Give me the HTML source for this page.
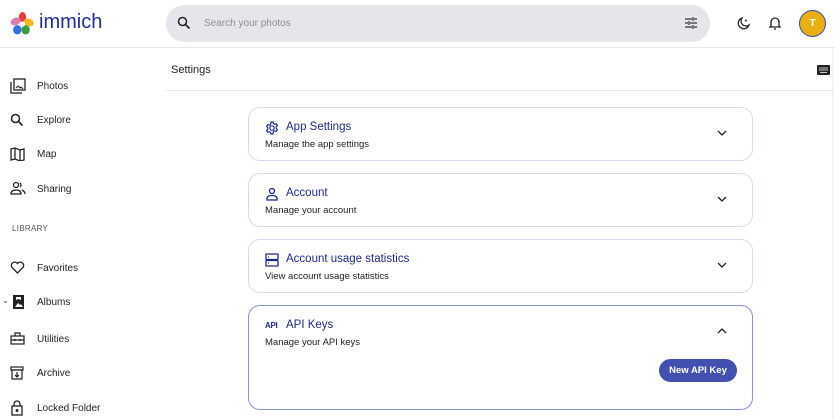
<!DOCTYPE html>
<html><head><style>
*{margin:0;padding:0;box-sizing:border-box}
body{width:835px;height:419px;overflow:hidden;background:#fff;font-family:"Liberation Sans",sans-serif;position:relative;color:#222}
.abs{position:absolute}
.hdr-line{position:absolute;left:0;top:47px;width:835px;height:1px;background:#e5e7eb}
.search{position:absolute;left:166px;top:5px;width:544px;height:37px;border-radius:19px;background:#e5e6ea}
.nav{position:absolute;left:37px;font-size:10px;color:#222}
.ico{position:absolute;left:10px}
.card{position:absolute;left:248px;width:505px;border:1px solid #d8d9ef;border-radius:12px;background:#fff}
.t{position:absolute;left:37px;top:13px;font-size:11.5px;color:#1e2a88}
.s{position:absolute;left:16px;top:31px;font-size:9.5px;color:#222}
.ci{position:absolute;left:16px;top:13px}
.chev{position:absolute;right:25px;top:22px}
</style></head><body>
<!-- logo -->
<svg class="abs" style="left:10px;top:11px" width="25" height="25" viewBox="0 0 24 24">
<ellipse cx="12" cy="6" rx="3.5" ry="5" fill="#e2403a"/>
<ellipse cx="18" cy="11" rx="5" ry="3.5" transform="rotate(20 18 11)" fill="#f2b620"/>
<ellipse cx="15" cy="18" rx="4" ry="4.5" fill="#3f9b3e"/>
<ellipse cx="7" cy="18" rx="4" ry="4.5" fill="#3471e0"/>
<ellipse cx="5.5" cy="10" rx="5" ry="3.5" transform="rotate(-20 5.5 10)" fill="#e079b0"/>
<circle cx="12" cy="12.5" r="2.5" fill="#fff"/>
</svg>
<div class="abs" style="left:39px;top:11px;font-size:20px;color:#1f2ca0">immich</div>
<div class="search"></div>
<svg class="abs" style="left:177px;top:16px" width="14" height="14" viewBox="0 0 14 14"><circle cx="5.5" cy="5.5" r="4" fill="none" stroke="#222" stroke-width="1.5"/><path d="M8.5 8.5l4 4" stroke="#222" stroke-width="1.6"/></svg>
<div class="abs" style="left:204px;top:18px;font-size:10px;color:#8a8d95">Search your photos</div>
<svg class="abs" style="left:684px;top:16px" width="14" height="14" viewBox="0 0 14 14" stroke="#333" stroke-width="1.2"><path d="M1 3h7M10 3h3M1 7h3M6 7h7M1 11h7M10 11h3M9 1v4M5 5v4M9 9v4"/></svg>
<svg class="abs" style="left:736px;top:16px" width="15" height="15" viewBox="0 0 15 15"><path d="M6 2a5.5 5.5 0 1 0 7 7A5 5 0 0 1 6 2z" fill="none" stroke="#222" stroke-width="1.3"/><path d="M10 3l.5 1 1 .5-1 .5-.5 1-.5-1-1-.5 1-.5z" fill="#222"/></svg>
<svg class="abs" style="left:768px;top:15px" width="14" height="16" viewBox="0 0 14 16"><path d="M3 11V7a4 4 0 0 1 8 0v4l1 1H2z" fill="none" stroke="#222" stroke-width="1.3"/><path d="M6 14h2" stroke="#222" stroke-width="1.3"/></svg>
<div class="abs" style="left:799px;top:10px;width:27px;height:27px;border-radius:50%;background:#e8b015;border:1px solid #3a4aa8;color:#fff;font-size:10px;font-weight:bold;text-align:center;line-height:25px">T</div>
<div class="hdr-line"></div>

<!-- sidebar -->
<svg class="ico" style="top:78px" width="16" height="16" viewBox="0 0 16 16" fill="none" stroke="#222" stroke-width="1.3"><rect x="4" y="1" width="11" height="11"/><path d="M1 4v11h11"/><path d="M6 10l2-2 2 2 1-1 2 2" stroke-width="1"/></svg>
<div class="nav" style="top:81px">Photos</div>
<svg class="ico" style="top:113px" width="14" height="14" viewBox="0 0 14 14"><circle cx="5.5" cy="5.5" r="4" fill="none" stroke="#222" stroke-width="1.5"/><path d="M8.5 8.5l4 4" stroke="#222" stroke-width="1.6"/></svg>
<div class="nav" style="top:115px">Explore</div>
<svg class="ico" style="top:147px" width="15" height="14" viewBox="0 0 15 14" fill="none" stroke="#222" stroke-width="1.3"><path d="M1 2l4-1 5 2 4-1v11l-4 1-5-2-4 1zM5 1v11M10 3v11"/></svg>
<div class="nav" style="top:149px">Map</div>
<svg class="ico" style="top:181px" width="16" height="14" viewBox="0 0 16 14" fill="none" stroke="#222" stroke-width="1.3"><circle cx="6" cy="4" r="2.5"/><path d="M1 13c0-3 2-4 5-4s5 1 5 4z"/><path d="M10 2a2.5 2.5 0 0 1 0 4M12 9c2 1 3 2 3 4"/></svg>
<div class="nav" style="top:184px">Sharing</div>
<div class="abs" style="left:12px;top:224px;font-size:8px;color:#555;letter-spacing:.3px">LIBRARY</div>
<svg class="ico" style="top:261px" width="15" height="13" viewBox="0 0 15 13"><path d="M7.5 12L2 6.5a3.2 3.2 0 0 1 5.5-4 3.2 3.2 0 0 1 5.5 4z" fill="none" stroke="#222" stroke-width="1.3"/></svg>
<div class="nav" style="top:263px">Favorites</div>
<div class="abs" style="left:2px;top:296px;font-size:8px;color:#444">⌄</div>
<svg class="ico" style="top:295px;left:13px" width="11" height="14" viewBox="0 0 11 14"><rect width="11" height="14" fill="#222"/><path d="M3 2h5v3l-2.5-1L3 5z" fill="#fff"/><path d="M2 12l3-4 2 2 1-1 2 3z" fill="#fff"/></svg>
<div class="nav" style="top:297px">Albums</div>
<svg class="ico" style="top:332px" width="15" height="13" viewBox="0 0 15 13" fill="none" stroke="#222" stroke-width="1.2"><rect x="1" y="4" width="13" height="8"/><path d="M5 4V1h5v3M1 8h13M5 7v2M10 7v2"/></svg>
<div class="nav" style="top:334px">Utilities</div>
<svg class="ico" style="top:366px" width="14" height="14" viewBox="0 0 14 14" fill="none" stroke="#222" stroke-width="1.2"><rect x="1" y="1" width="12" height="3"/><rect x="2" y="4" width="10" height="9"/><path d="M7 6v5M5 9l2 2 2-2"/></svg>
<div class="nav" style="top:368px">Archive</div>
<svg class="ico" style="top:400px" width="14" height="16" viewBox="0 0 14 16" fill="none" stroke="#222" stroke-width="1.3"><path d="M4 6V4a3 3 0 0 1 6 0v2"/><rect x="2" y="6" width="10" height="9"/><circle cx="7" cy="10.5" r=".8" fill="#222"/></svg>
<div class="nav" style="top:403px">Locked Folder</div>

<!-- main -->
<div class="abs" style="left:171px;top:64px;font-size:11px;color:#222">Settings</div>
<svg class="abs" style="left:817px;top:65px" width="13" height="10" viewBox="0 0 13 10"><rect width="13" height="10" rx="1" fill="#222"/><path d="M2 3h9M2 5h9M3 7.5h7" stroke="#fff" stroke-width=".8"/></svg>
<div class="abs" style="left:166px;top:90px;width:669px;height:1px;background:#e5e7eb"></div>
<div class="abs" style="left:832px;top:48px;width:1px;height:371px;background:#eee"></div>

<div class="card" style="top:107px;height:54px">
<svg class="ci" width="14" height="14" viewBox="0 0 14 14" fill="none" stroke="#1e2a88" stroke-width="1.2"><circle cx="7" cy="7" r="2.2"/><path d="M6 1h2l.4 1.6 1.4.8 1.6-.5 1 1.7-1.2 1.2v1.6l1.2 1.2-1 1.7-1.6-.5-1.4.8L8 13H6l-.4-1.6-1.4-.8-1.6.5-1-1.7 1.2-1.2V6.6L1.6 5.4l1-1.7 1.6.5 1.4-.8z"/></svg>
<div class="t">App Settings</div><div class="s">Manage the app settings</div>
<svg class="chev" width="10" height="6" viewBox="0 0 10 6"><path d="M1 1l4 4 4-4" fill="none" stroke="#222" stroke-width="1.3"/></svg>
</div>
<div class="card" style="top:173px;height:54px">
<svg class="ci" width="14" height="14" viewBox="0 0 14 14" fill="none" stroke="#1e2a88" stroke-width="1.3"><circle cx="7" cy="4" r="2.5"/><path d="M2 13v-1.5c0-2 2-3 5-3s5 1 5 3V13z"/></svg>
<div class="t">Account</div><div class="s">Manage your account</div>
<svg class="chev" width="10" height="6" viewBox="0 0 10 6"><path d="M1 1l4 4 4-4" fill="none" stroke="#222" stroke-width="1.3"/></svg>
</div>
<div class="card" style="top:239px;height:54px">
<svg class="ci" width="14" height="14" viewBox="0 0 14 14" fill="none" stroke="#1e2a88" stroke-width="1.3"><rect x="1" y="1" width="12" height="5.5" rx=".5"/><rect x="1" y="7.5" width="12" height="5.5" rx=".5"/><path d="M3 4h1M3 10h1"/></svg>
<div class="t">Account usage statistics</div><div class="s">View account usage statistics</div>
<svg class="chev" width="10" height="6" viewBox="0 0 10 6"><path d="M1 1l4 4 4-4" fill="none" stroke="#222" stroke-width="1.3"/></svg>
</div>
<div class="card" style="top:305px;height:105px;border-color:#8a90d8">
<div class="ci" style="font-size:8px;font-weight:bold;color:#1e2a88;top:15px;letter-spacing:-.3px">API</div>
<div class="t">API Keys</div><div class="s">Manage your API keys</div>
<svg class="chev" style="top:22px" width="10" height="6" viewBox="0 0 10 6"><path d="M1 5l4-4 4 4" fill="none" stroke="#222" stroke-width="1.3"/></svg>
<div class="abs" style="left:410px;top:53px;width:78px;height:23px;border-radius:12px;background:#4250af;color:#fff;font-size:9.5px;font-weight:bold;text-align:center;line-height:23px">New API Key</div>
</div>
</body></html>
